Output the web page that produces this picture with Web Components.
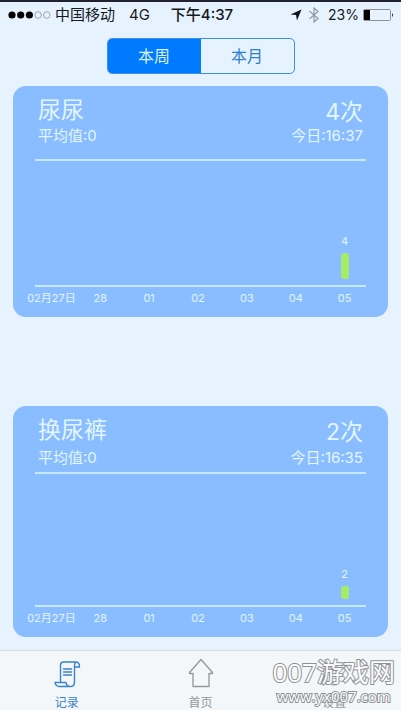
<!DOCTYPE html>
<html lang="zh-CN">
<head>
<meta charset="utf-8">
<meta name="viewport" content="width=device-width, initial-scale=1">
<title>记录</title>
<style>
html,body{margin:0;height:100%}
body{font-family:Inter,"Noto Sans CJK SC",sans-serif;background:#e6f2fe;color:#15181c}
</style>
</head>
<body>
<record-app></record-app>
<script>
function define(name, html, setup) {
  const template = document.createElement('template');
  template.innerHTML = html;
  customElements.define(name, class extends HTMLElement {
    constructor() {
      super();
      this.attachShadow({mode: 'open'});
    }
    connectedCallback() {
      if (this.shadowRoot.firstChild) return;
      this.shadowRoot.append(template.content.cloneNode(true));
      if (setup) setup(this, this.shadowRoot);
    }
  });
}

define('status-bar', `
<style>
:host{display:grid;grid-template-columns:1fr auto 1fr;align-items:center;height:26px;padding:0 7px 0 8px;border-top:2px solid #20222e;font-size:15px;line-height:24px;white-space:nowrap}
.left,.right{display:flex;align-items:center}
.right{justify-content:flex-end}
.dots{margin-right:4px}
.net{margin-left:14px}
.time{font-weight:500;padding-left:2px}
.charge{font-size:14px}
.bt{margin:0 8px 0 6px}
.bat{margin-left:4px}
svg{display:block;flex:none}
</style>
<div class="left">
  <svg class="dots" width="43" height="10" viewBox="0 0 43 10"><g fill="#050505"><circle cx="4" cy="5" r="3.6"/><circle cx="12.7" cy="5" r="3.6"/><circle cx="21.4" cy="5" r="3.6"/></g><g fill="none" stroke="#8b9096" stroke-width=".8"><circle cx="30.1" cy="5" r="3.3"/><circle cx="38.8" cy="5" r="3.3"/></g></svg>
  <span>中国移动</span><span class="net">4G</span>
</div>
<span class="time">下午4:37</span>
<div class="right">
  <svg width="12" height="12" viewBox="0 0 12 12"><path d="M11.500 .5 7 11.500 6 6 .5 5.500Z" fill="#101214"/></svg>
  <svg class="bt" width="12" height="16" viewBox="0 0 12 16"><path d="M1.500 4.200 10 11.500 6 15V1l4 3.500-8.500 7.300" fill="none" stroke="#8a9097" stroke-width="1.1"/></svg>
  <span class="charge">23%</span>
  <svg class="bat" width="31" height="14" viewBox="0 0 31 14"><rect x=".5" y="1.500" width="27" height="11" rx="1" fill="none" stroke="#8d9298"/><path d="M1 2h6v10H1z" fill="#000"/><path d="M29 5q2 2 0 4z" fill="#222"/></svg>
</div>`);

define('segmented-control', `
<style>
:host{display:flex;width:188px;height:36px;box-sizing:border-box;border:1px solid #3d8ede;border-radius:5px;overflow:hidden}
button{flex:1;border:0;margin:0;padding:0;background:none;color:#2f7fd0;font:inherit;font-size:16px;line-height:34px}
button[aria-pressed=true]{background:#007aff;color:#d8f2ff}
</style>
<button type="button" aria-pressed="true">本周</button><button type="button" aria-pressed="false">本月</button>`,
(host, root) => {
  const buttons = root.querySelectorAll('button');
  buttons.forEach(b => b.addEventListener('click', () =>
    buttons.forEach(o => o.setAttribute('aria-pressed', o === b))));
});

define('record-card', `
<style>
:host{display:flex;flex-direction:column;box-sizing:border-box;min-height:231px;padding:8px 0;border-radius:13px;background:#89bdff;color:#e2f6ff}
header{display:grid;grid-template-columns:1fr auto;padding:0 25px;line-height:20px;font-size:15px;row-gap:var(--row-gap,0px);padding-bottom:var(--head-end,13px)}
h2{margin:0;font-size:23px;line-height:32px;font-weight:400}
.count{font-size:23px;line-height:36px;height:32px;text-align:right}
.today{text-align:right}
.plot{flex:1;display:flex;margin:0 22px;border:solid #c4e9ff;border-width:2px 0}
.bars,.labels{display:grid;grid-template-columns:repeat(7,1fr)}
.bars{flex:1;margin:0 -3px 0 -8px;align-items:end;padding-bottom:6px}
.labels{padding:0 19px 0 14px;font-size:11px;line-height:22px;text-align:center;white-space:nowrap}
.bar{display:flex;flex-direction:column;align-items:center;gap:3px;font-size:11px;line-height:18px}
.bar i{width:8px;border-radius:3px;background:#a5ec64}
</style>
<header><h2><slot name="title"></slot></h2><span class="count"><slot name="count"></slot></span><span class="average"><slot name="average"></slot></span><span class="today"><slot name="today"></slot></span></header>
<div class="plot"><div class="bars"></div></div>
<div class="labels"></div>`,
(host, root) => {
  const values = host.getAttribute('values').split(',').map(Number);
  host.getAttribute('days').split(',').forEach((day, n) => {
    const label = document.createElement('span');
    label.textContent = day;
    root.querySelector('.labels').append(label);
    const bar = document.createElement('div');
    bar.className = 'bar';
    if (values[n]) {
      const shape = document.createElement('i');
      shape.style.height = Math.round(values[n] * 6.5) + 'px';
      bar.append(String(values[n]), shape);
    }
    root.querySelector('.bars').append(bar);
  });
});

define('tab-item', `
<style>
:host{flex:1;display:flex}
a{flex:1;display:flex;flex-direction:column;align-items:center;gap:6px;padding-top:7px;color:#92979b;text-decoration:none;font-size:12px;line-height:14px}
::slotted(svg){flex:none}
:host([selected]) a{color:#3b82c9}
</style>
<a href="#"><slot name="icon"></slot><span><slot></slot></span></a>`);

define('site-mark', `
<style>
:host{display:flex;flex-direction:column;align-items:center;font-family:"Open Sans","Noto Sans CJK SC",sans-serif;color:#fdfdfd;white-space:nowrap;pointer-events:none;paint-order:stroke fill;-webkit-text-stroke:2px #8f9295}
.name{font-size:26px;line-height:30px}
.url{font-size:15px;line-height:18px}
</style>
<span class="name">007游戏网</span><span class="url">www.yx007.com</span>`);

define('tab-bar', `
<style>
:host{display:flex;position:relative;min-height:59px;border-top:1px solid #d5dde5;background:#f3f7f9}
svg{display:block}
site-mark{position:absolute;right:6px;bottom:5px}
</style>
<tab-item selected><svg slot="icon" width="32" height="32" viewBox="0 0 32 32" fill="none" stroke="currentColor" stroke-width="1.400" stroke-linejoin="round" stroke-linecap="round"><path d="M9.500 24.500V7Q9.500 4 12.500 4h12.500q3.500 0 3.500 5h-5V24q0 4.500-3.500 4.500H8q-3.500-.5-4-4H15q.5 4 5 4M23.500 9Q23.500 4.500 25 4M12.500 11h8M12.500 14h8M12.500 17h8"/></svg>记录</tab-item>
<tab-item><svg slot="icon" width="32" height="32" viewBox="0 0 32 32" fill="none" stroke="currentColor" stroke-width="1.300" stroke-linejoin="round"><path d="M16 1.500 27.500 14.500v1H24V28.500H8V15.500H4.500V14.500Z"/></svg>首页</tab-item>
<tab-item><svg slot="icon" width="32" height="32" viewBox="0 0 32 32" fill="none" stroke="#b4b8bb" stroke-width="1.200" stroke-linejoin="round"><path d="m14 6h4l1 3 3 1 3-1 2 4-2 2v3l2 2-2 4-3-1-3 1-1 3h-4l-1-3-3-1-3 1-2-4 2-2v-3l-2-2 2-4 3 1 3-1Z"/><circle cx="16" cy="16.500" r="4"/></svg>设置</tab-item>
<site-mark></site-mark>`);

define('record-app', `
<style>
:host{display:flex;flex-direction:column;min-height:100vh}
segmented-control{margin:10px auto 12px}
main{flex:1;display:flex;flex-direction:column;justify-content:space-between;gap:24px;padding:0 13px 13px}
.diaper{--row-gap:2px;--head-end:4px}
</style>
<status-bar></status-bar>
<segmented-control></segmented-control>
<main>
<record-card days="02月27日,28,01,02,03,04,05" values="0,0,0,0,0,0,4"><span slot="title">尿尿</span><span slot="count">4次</span><span slot="average">平均值:0</span><span slot="today">今日:16:37</span></record-card>
<record-card class="diaper" days="02月27日,28,01,02,03,04,05" values="0,0,0,0,0,0,2"><span slot="title">换尿裤</span><span slot="count">2次</span><span slot="average">平均值:0</span><span slot="today">今日:16:35</span></record-card>
</main>
<tab-bar></tab-bar>`);
</script>
</body>
</html>
